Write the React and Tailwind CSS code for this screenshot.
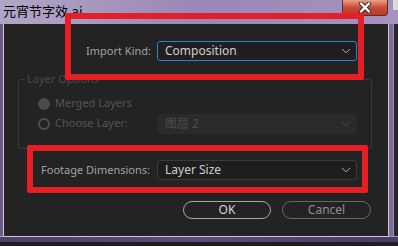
import React from 'react';

const Chevron = ({ color = '#a8a8a8' }) => (
  <svg width="10" height="6" viewBox="0 0 10 6" fill="none">
    <polyline points="1,1 5,4.8 9,1" stroke={color} strokeWidth="1" />
  </svg>
);

const CloseGlyph = () => (
  <svg width="14" height="11" viewBox="0 0 14 11">
    <path d="M3 1.5 L11 9.5 M11 1.5 L3 9.5" stroke="#3a2a2a" strokeWidth="4.2" strokeLinecap="round" />
    <path d="M3 1.5 L11 9.5 M11 1.5 L3 9.5" stroke="#ffffff" strokeWidth="2.4" strokeLinecap="round" />
  </svg>
);

const Dropdown = ({ value, focused, disabled }) => {
  let box = 'border border-[#3b3b3b] bg-[#1e1e1e] text-[#cfcfcf]';
  if (focused) box = 'border border-[#2f7fd4] bg-[#1f1f1f] text-[#cfcfcf]';
  if (disabled) box = 'border border-transparent bg-[#2a2a2a] text-[#4c4c4c]';
  return (
    <div className={`w-[200px] h-[20px] rounded-[3px] flex items-center justify-between pl-[7px] pr-[5px] ${box}`}>
      <span className="leading-none text-[12px]">{value}</span>
      <Chevron color={disabled ? '#474747' : '#a8a8a8'} />
    </div>
  );
};

const Radio = ({ filled }) => (
  <span
    className={`w-[12px] h-[12px] rounded-full shrink-0 ${
      filled ? 'bg-[#4a4a4a]' : 'border-2 border-[#4d4d4d]'
    }`}
  />
);

export default function App() {
  return (
    <div
      className="relative w-[398px] h-[246px] overflow-hidden flex flex-col bg-gradient-to-r from-[#b2a6c6] via-[#9987b7] to-[#a492c0]"
      style={{ fontFamily: '"Noto Sans", "Noto Sans CJK SC", sans-serif' }}
    >
      {/* title bar */}
      <div className="h-[24px] shrink-0 flex items-start justify-between">
        <span
          className="pl-[3px] pt-[3px] text-[13px] leading-[16px] text-black"
          style={{ fontFamily: '"Noto Sans CJK SC", sans-serif' }}
        >
          元宵节字效.ai
        </span>
        <div className="flex items-start">
          <div className="w-[46px] h-[16px] rounded-b-[4px] border border-t-0 border-[#5d2d2a] bg-gradient-to-b from-[#e9a08c] via-[#c94a36] to-[#b83a28] flex items-center justify-center">
            <CloseGlyph />
          </div>
          <div className="w-[5px]" />
          <div className="w-[5px] h-[10px] bg-[#dcdcdc]" />
        </div>
      </div>

      {/* body */}
      <div className="flex flex-1">
        <div className="w-[4px] h-[212px] border-r border-[#cfc6dc] bg-[#6c5a88]" />
        <div className="w-[384px] h-[212px] bg-[#232323] text-[11px] pt-[17px]">
          <div className="flex items-center h-[20px]">
            <span className="w-[148px] text-right pr-[1px] text-[#a2a2a2]">Import Kind:</span>
            <div className="ml-[5px]">
              <Dropdown value="Composition" focused />
            </div>
          </div>

          <fieldset className="ml-[14px] mt-[10px] w-[354px] border border-[#383838] rounded-[3px]">
            <legend className="ml-[6px] px-[2px] leading-[16px] text-[#4a4a4a]">Layer Options</legend>
            <div className="pt-[8px] pl-[19px] pb-[15px]">
              <div className="flex items-center gap-[5px] h-[17px] text-[#555555]">
                <Radio filled />
                <span>Merged Layers</span>
              </div>
              <div className="flex items-center mt-[2px] h-[19px] text-[#555555]">
                <div className="w-[119px] flex items-center gap-[5px]">
                  <Radio />
                  <span>Choose Layer:</span>
                </div>
                <Dropdown value="图层 2" disabled />
              </div>
            </div>
          </fieldset>

          <div className="flex items-center h-[20px] mt-[11px]">
            <span className="w-[148px] text-right pr-[2px] text-[#a2a2a2]">Footage Dimensions:</span>
            <div className="ml-[5px]">
              <Dropdown value="Layer Size" />
            </div>
          </div>

          <div className="flex mt-[21px] pl-[179px] gap-[11px] text-[12px]">
            <div className="w-[88px] h-[18px] rounded-full border border-[#a9a9a9] flex items-center justify-center text-[#d6d6d6]">
              OK
            </div>
            <div className="w-[89px] h-[18px] rounded-full border border-[#686868] flex items-center justify-center text-[#8f8f8f]">
              Cancel
            </div>
          </div>
        </div>
        <div className="w-[5px] h-[212px] border-l border-[#cfc6dc] bg-[#7c6b9a]" />
        <div className="w-[5px] h-[212px] bg-[#262626] border-l border-[#9c8fb5]" />
      </div>

      {/* bottom frame */}
      <div className="h-[10px] shrink-0 flex flex-col">
        <div className="h-[1px] bg-[#cfc6dc] ml-[4px] w-[385px]" />
        <div className="h-[5px] bg-gradient-to-r from-[#4e3f68] via-[#5d4a7c] to-[#4a3a66]" />
        <div className="flex-1 bg-[#1e1e1e]" />
      </div>

      {/* red annotation boxes */}
      <div className="absolute left-[65px] top-[13px] w-[299px] h-[67px] border-[6px] border-[#e61f27] rounded-[2px]" />
      <div className="absolute left-[27px] top-[145px] w-[341px] h-[48px] border-[6px] border-[#e61f27] rounded-[2px]" />
    </div>
  );
}
